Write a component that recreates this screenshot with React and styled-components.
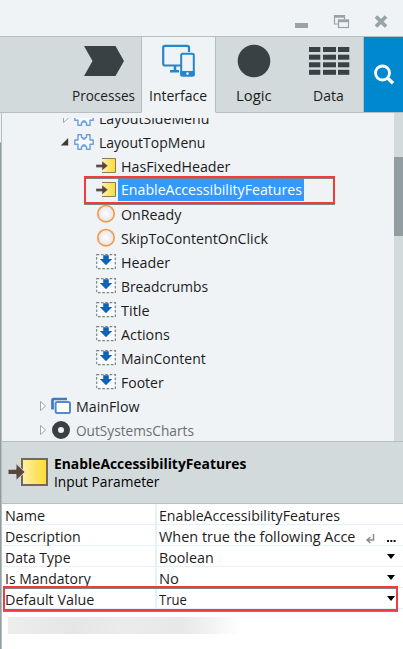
import React, { useLayoutEffect, useRef, useState } from 'react';
import styled, { createGlobalStyle } from 'styled-components';

const Global = createGlobalStyle`
  * { box-sizing: border-box; }
  body { margin: 0; background: #eff3f6; }
`;

const Window = styled.div`
  width: 403px;
  height: 649px;
  overflow: hidden;
  display: flex;
  flex-direction: column;
  background: #eff3f6;
  color: #1c1c1c;
  font-family: 'Open Sans', 'Noto Sans', sans-serif;
  font-size: 14px;
  line-height: 21px;
`;

const TextBox = styled.span`
  display: block;
  flex: none;
  width: ${p => p.$w}px;
  white-space: nowrap;
  font-weight: ${p => (p.$bold ? 700 : 400)};
`;
const Scaled = styled.span`
  display: inline-block;
  transform-origin: 0 50%;
`;

/* Condenses a label so that it takes exactly the given width. */
function Label({ w, bold, children }) {
  const ref = useRef(null);
  const [scale, setScale] = useState(1);
  useLayoutEffect(() => {
    setScale(w / ref.current.offsetWidth);
  }, [w, children]);
  return (
    <TextBox $w={w} $bold={bold}>
      <Scaled ref={ref} style={{ transform: `scaleX(${scale})` }}>{children}</Scaled>
    </TextBox>
  );
}

const TitleBar = styled.header`
  flex: none;
  height: 36px;
  display: flex;
  justify-content: flex-end;
  padding: 14px 14px 0 0;
`;
const Toolbar = styled.nav`
  flex: none;
  height: 77px;
  display: flex;
  border-top: 1px solid #b5bfc1;
`;
const Tab = styled.div`
  width: ${p => p.$w}px;
  padding-left: ${p => p.$pad}px;
  height: 76px;
  display: flex;
  flex-direction: column;
  background: ${p => (p.$active ? '#eff3f6' : '#d2dadc')};
  border-bottom: 1px solid ${p => (p.$active ? '#eff3f6' : '#b5bfc1')};
  border-left: ${p => (p.$active ? '1px solid #b5bfc1' : '0')};
  border-right: ${p => (p.$active || p.$last ? '1px solid #b5bfc1' : '0')};
`;
const TabIcon = styled.svg`
  display: block;
  flex: none;
  width: 42px;
  height: 42px;
  margin: 3px 0 3px ${p => p.$x}px;
`;
const Search = styled.div`
  width: 39px;
  height: 76px;
  background: #0088cf;
  border-bottom: 1px solid #b5bfc1;
`;
const Body = styled.div`
  flex: 1;
  min-height: 0;
  display: flex;
`;
const Edge = styled.div`
  width: 2px;
  padding-top: 29px;
  border-right: 1px solid #b5bfc1;
`;
const EdgeShade = styled.div`
  height: 507px;
  background: #929da1;
  border-top: 1px solid #b5bfc1;
`;
const Main = styled.div`
  flex: 1;
  min-width: 0;
  display: flex;
  flex-direction: column;
`;
const TreePane = styled.div`
  height: 328px;
  display: flex;
  padding-top: 5px;
`;
const Tree = styled.div`
  flex: 1;
  height: 323px;
  display: flex;
  flex-direction: column;
  justify-content: flex-end;
  overflow: hidden;
`;
const Row = styled.div`
  position: relative;
  flex: none;
  height: 24px;
  display: flex;
  align-items: center;
  padding-left: ${p => p.$pad}px;
  color: ${p => (p.$muted ? '#6b6f71' : '#1c1c1c')};
  &:last-child { margin-bottom: -1px; }
`;
const RowIcon = styled.svg`
  display: block;
  flex: none;
  width: 20px;
  height: 20px;
  margin-right: ${p => (p.$selected ? 2 : 5)}px;
`;
const Arrow = styled.svg`
  display: block;
  flex: none;
  width: 10px;
  height: 12px;
  margin-right: 3px;
`;
const Selection = styled.div`
  height: 22px;
  width: 186px;
  padding-left: 3px;
  background: #3399ff;
  color: #fff;
  line-height: 22px;
`;
const Highlight = styled.div`
  position: absolute;
  left: ${p => p.$x}px;
  top: ${p => p.$y}px;
  width: ${p => p.$w}px;
  height: ${p => p.$h}px;
  border: 2px solid #f43b3b;
  box-shadow: 0 1px 0 #7d8285, inset 0 1px 0 #7d8285;
`;
const Scroll = styled.div`
  width: 9px;
  height: 328px;
  margin-top: -5px;
  padding-top: 44px;
  background: #d2dadc;
`;
const Thumb = styled.div`
  height: 79px;
  background: #929da1;
`;
const Details = styled.section`
  flex: none;
  height: 63px;
  display: flex;
  padding: 12px 0 0 5px;
  gap: 6px;
  background: #d2dadc;
  border-top: 1px solid #b5bfc1;
  border-bottom: 1px solid #b5bfc1;
`;
const DetailsIcon = styled.svg`
  display: block;
  width: 41px;
  height: 36px;
`;
const DetailsText = styled.div`
  padding-top: 1px;
  color: #000;
  line-height: 18px;
`;
const Props = styled.div`
  flex: 1;
  background: #fff;
`;
const PropRow = styled.div`
  position: relative;
  height: 21px;
  display: flex;
  color: #1c1c1c;
`;
const Name = styled.div`
  width: 154px;
  height: 21px;
  margin-left: 1px;
  padding: 1px 0 0 2px;
  border-right: 2px solid #e3f1f9;
  border-bottom: 1px solid #e3f1f9;
  line-height: 22px;
`;
const Value = styled.div`
  flex: 1;
  display: flex;
  padding: 1px 7px 0 2px;
  border-bottom: 1px solid #e3f1f9;
  line-height: 22px;
`;
const Control = styled.svg`
  display: block;
  width: 34px;
  height: 18px;
  margin-left: auto;
`;
const Redacted = styled.div`
  width: 232px;
  height: 17px;
  margin: 8px 0 0 6px;
  background: linear-gradient(90deg, #ededed, #e6e6e6 28%, #ebebeb 50%, #e8e8e8 75%, #f2f2f2 87%, #fff);
`;

function InputIcon() {
  return (
    <>
      <defs>
        <linearGradient id="gold" x1="0" x2="1">
          <stop offset="0" stopColor="#fff0a8" />
          <stop offset="1" stopColor="#fddb2e" />
        </linearGradient>
      </defs>
      <rect x="6.5" y="2.5" width="13" height="14" fill="url(#gold)" />
      <path d="M6 2.5H19.5V16.5H6" fill="none" stroke="#8b7b58" />
      <path d="M0 8.4H6V5L12 9.8L6 14.6V11.4H0Z" fill="#58473f" stroke="#eff3f6" strokeWidth=".4" />
    </>
  );
}
function EventIcon() {
  return (
    <>
      <defs>
        <radialGradient id="pearl">
          <stop offset="0" stopColor="#fff" />
          <stop offset="1" stopColor="#e4e4e6" />
        </radialGradient>
      </defs>
      <circle cx="10" cy="9.7" r="8.2" fill="url(#pearl)" stroke="#f39b4b" strokeWidth="1.7" />
    </>
  );
}
function PlaceholderIcon() {
  return (
    <>
      <rect x=".7" y="2.7" width="18.6" height="14" fill="#f8fafc" stroke="#7d8588" strokeWidth="1.2" strokeDasharray="2.6 1.7" />
      <path d="M7.2 3.2H12.8V7H16.2L10 13.2L3.8 7H7.2Z" fill="#1160bb" />
    </>
  );
}
function BlockIcon() {
  return (
    <path
      d="M4 2.7H7.5V5.6H9V7H11V5.6H12.5V2.7H16V8H19.2V12.2H16V17.3H12.5V14.4H11V13H9V14.4H7.5V17.3H4V12.2H.8V8H4Z"
      fill="#f7fbff" stroke="#6c9cdb" strokeWidth="1.4" strokeLinejoin="round"
    />
  );
}
function FlowIcon() {
  return (
    <>
      <path d="M1.5 13.5V4Q1.5 3 2.5 3H16" fill="none" stroke="#4079c5" strokeWidth="2.7" />
      <rect x="4.6" y="6" width="14.4" height="11" rx="1.8" fill="#fff" stroke="#5688d0" strokeWidth="2" />
    </>
  );
}
function ModuleIcon() {
  return <circle cx="10" cy="10" r="6" fill="none" stroke="#384044" strokeWidth="6" />;
}
const ICONS = {
  input: InputIcon, event: EventIcon, place: PlaceholderIcon,
  block: BlockIcon, flow: FlowIcon, module: ModuleIcon,
};

const TREE = [
  { text: 'LayoutSideMenu', w: 110, icon: 'block', pad: 59, arrow: 'closed' },
  { text: 'LayoutTopMenu', w: 106, icon: 'block', pad: 59, arrow: 'open' },
  { text: 'HasFixedHeader', w: 109, icon: 'input', pad: 94 },
  { text: 'EnableAccessibilityFeatures', w: 181, icon: 'input', pad: 94, selected: true },
  { text: 'OnReady', w: 60, icon: 'event', pad: 94 },
  { text: 'SkipToContentOnClick', w: 147, icon: 'event', pad: 94 },
  { text: 'Header', w: 49, icon: 'place', pad: 94 },
  { text: 'Breadcrumbs', w: 87, icon: 'place', pad: 94 },
  { text: 'Title', w: 29, icon: 'place', pad: 94 },
  { text: 'Actions', w: 49, icon: 'place', pad: 94 },
  { text: 'MainContent', w: 85, icon: 'place', pad: 94 },
  { text: 'Footer', w: 43, icon: 'place', pad: 94 },
  { text: 'MainFlow', w: 64, icon: 'flow', pad: 36, arrow: 'closed' },
  { text: 'OutSystemsCharts', w: 118, icon: 'module', pad: 36, arrow: 'closed', muted: true },
];

const PROPS = [
  { name: 'Name', nw: 40, value: 'EnableAccessibilityFeatures', vw: 181 },
  { name: 'Description', nw: 76, value: 'When true the following Acce', vw: 196, control: 'edit' },
  { name: 'Data Type', nw: 66, value: 'Boolean', vw: 55, control: 'menu' },
  { name: 'Is Mandatory', nw: 86, value: 'No', vw: 20, control: 'menu' },
  { name: 'Default Value', nw: 89, value: 'True', vw: 28, control: 'menu', highlighted: true },
];

function TreeRow({ item }) {
  const Icon = ICONS[item.icon];
  return (
    <Row $pad={item.pad} $muted={item.muted}>
      {item.arrow && (
        <Arrow viewBox="0 0 10 12">
          {item.arrow === 'open'
            ? <path d="M7.2 2V9.5H-.3Z" fill="#3c3c3c" />
            : <path d="M2.5 1.5L7.5 6L2.5 10.5Z" fill="#f7f9fa" stroke="#a3a7a9" />}
        </Arrow>
      )}
      <RowIcon viewBox="0 0 20 20" $selected={item.selected}><Icon /></RowIcon>
      {item.selected
        ? <Selection><Label w={item.w}>{item.text}</Label></Selection>
        : <Label w={item.w}>{item.text}</Label>}
      {item.selected && <Highlight $x={82} $y={-2} $w={251} $h={28} />}
    </Row>
  );
}

export default function App() {
  return (
    <Window>
      <Global />
      <TitleBar>
        <svg width="96" height="16" viewBox="0 0 96 16" fill="none">
          <rect x="2" y="9" width="13" height="5" fill="#98a3a7" />
          <g stroke="#98a3a7">
            <path d="M45 10H41.5V1.5H51.5V5" strokeWidth="1.2" />
            <path d="M41 2.5H52" strokeWidth="2.4" />
            <rect x="45.5" y="6" width="10" height="7.5" strokeWidth="1.2" />
            <path d="M45 7H56" strokeWidth="2.4" />
            <path d="M83 2.5L93 12.5M93 2.5L83 12.5" strokeWidth="3.8" />
          </g>
        </svg>
      </TitleBar>
      <Toolbar>
        <Tab $w={141} $pad={72}>
          <TabIcon viewBox="0 0 42 42" $x={11}>
            <path d="M1 6H32.5L41 21L32.5 36H1L9.5 21Z" fill="#394144" />
          </TabIcon>
          <Label w={63}>Processes</Label>
        </Tab>
        <Tab $w={75} $pad={7} $active>
          <TabIcon viewBox="0 0 42 42" $x={10}>
            <g fill="none" stroke="#2387c8">
              <path d="M22 25.5H6Q4.2 25.5 4.2 23.5V7.5Q4.2 5.8 6 5.8H28Q30 5.8 30 7.5V12" strokeWidth="2.2" />
              <path d="M11 31.2H20M16 26V31" strokeWidth="2.6" />
              <rect x="22.2" y="13.8" width="12.6" height="22" rx="1.5" strokeWidth="2" />
            </g>
            <path d="M21.5 31H35.5V36H21.5Z" fill="#2387c8" />
            <circle cx="28.5" cy="33.6" r="1.3" fill="#eff3f6" />
          </TabIcon>
          <Label w={58}>Interface</Label>
        </Tab>
        <Tab $w={77} $pad={20}>
          <TabIcon viewBox="0 0 42 42" $x={-3}>
            <circle cx="21" cy="21" r="16.3" fill="#394144" />
          </TabIcon>
          <Label w={36}>Logic</Label>
        </Tab>
        <Tab $w={71} $pad={20} $last>
          <TabIcon viewBox="0 0 42 42" $x={-5}>
            {[7, 14.7, 22.3, 29.8].map(y => [1, 15, 30].map(x => (
              <rect key={`${x}-${y}`} x={x} y={y} width={x === 15 ? 13 : 11.3} height="5" fill="#394144" />
            )))}
          </TabIcon>
          <Label w={31}>Data</Label>
        </Tab>
        <Search>
          <svg width="39" height="75" viewBox="0 0 39 75" fill="none" stroke="#fff">
            <circle cx="18.5" cy="36" r="7" strokeWidth="2.8" />
            <path d="M23.8 41.3L29 46.3" strokeWidth="3.4" />
          </svg>
        </Search>
      </Toolbar>
      <Body>
        <Edge><EdgeShade /></Edge>
        <Main>
          <TreePane>
            <Tree>{TREE.map(item => <TreeRow key={item.text} item={item} />)}</Tree>
            <Scroll><Thumb /></Scroll>
          </TreePane>
          <Details>
            <DetailsIcon viewBox="0 0 41 36">
              <rect x="15" y="5" width="25" height="26" fill="url(#gold)" stroke="#75675b" strokeWidth="2" />
              <path d="M1 15.2H9V9.5L18 18L9 26.5V20.5H1Z" fill="#58473f" stroke="#d2dadc" strokeWidth="1" />
            </DetailsIcon>
            <DetailsText>
              <Label w={192} bold>EnableAccessibilityFeatures</Label>
              <Label w={105}>Input Parameter</Label>
            </DetailsText>
          </Details>
          <Props>
            {PROPS.map(p => (
              <PropRow key={p.name}>
                <Name><Label w={p.nw}>{p.name}</Label></Name>
                <Value>
                  <Label w={p.vw}>{p.value}</Label>
                  {p.control && (
                    <Control viewBox="0 0 34 18">
                      {p.control === 'menu'
                        ? <path d="M25 7H33L29 12Z" fill="#000" />
                        : (
                          <>
                            <path d="M11.5 8V14H5.5M8.5 11L5 14L8.5 17" fill="none" stroke="#8c8c8c" strokeWidth="1.5" />
                            <path d="M25 14H27V16H25ZM28.3 14H30.3V16H28.3ZM31.6 14H33.6V16H31.6Z" fill="#111" />
                          </>
                        )}
                    </Control>
                  )}
                </Value>
                {p.highlighted && <Highlight $x={1} $y={-2} $w={395} $h={25} />}
              </PropRow>
            ))}
            <Redacted />
          </Props>
        </Main>
      </Body>
    </Window>
  );
}
